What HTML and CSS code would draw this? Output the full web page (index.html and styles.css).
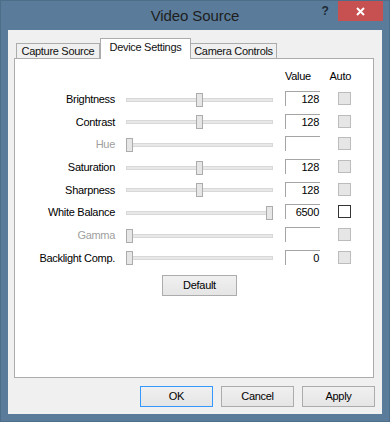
FILE: index.html
```html
<!DOCTYPE html>
<html>
<head>
<meta charset="utf-8">
<link rel="stylesheet" href="styles.css">
</head>
<body>
<div class="window">
  <div class="titlebar">
    <div></div>
    <div class="title">Video Source</div>
    <div class="controls">
      <div class="help">?</div>
      <div class="close">
        <svg width="9" height="9" viewBox="0 0 9 9"><path d="M1 1L8 8M8 1L1 8" stroke="#fff" stroke-width="2"/></svg>
      </div>
    </div>
  </div>
  <div class="client">
    <div class="tabs">
      <div class="tab t1">Capture Source</div>
      <div class="tab sel">Device Settings</div>
      <div class="tab t3">Camera Controls</div>
    </div>
    <div class="panel">
      <div class="row head">
        <div class="spacer"></div>
        <div class="hval">Value</div>
        <div class="hauto">Auto</div>
      </div>
      <div class="row">
        <div class="label">Brightness</div>
        <div class="slider"><div class="track"></div><div class="thumb" style="left:70px"></div></div>
        <div class="value">128</div>
        <div class="check dis"></div>
      </div>
      <div class="row">
        <div class="label">Contrast</div>
        <div class="slider"><div class="track"></div><div class="thumb" style="left:70px"></div></div>
        <div class="value">128</div>
        <div class="check dis"></div>
      </div>
      <div class="row disabled">
        <div class="label">Hue</div>
        <div class="slider"><div class="track"></div><div class="thumb" style="left:0px"></div></div>
        <div class="value"></div>
        <div class="check dis"></div>
      </div>
      <div class="row">
        <div class="label">Saturation</div>
        <div class="slider"><div class="track"></div><div class="thumb" style="left:70px"></div></div>
        <div class="value">128</div>
        <div class="check dis"></div>
      </div>
      <div class="row">
        <div class="label">Sharpness</div>
        <div class="slider"><div class="track"></div><div class="thumb" style="left:70px"></div></div>
        <div class="value">128</div>
        <div class="check dis"></div>
      </div>
      <div class="row">
        <div class="label">White Balance</div>
        <div class="slider"><div class="track"></div><div class="thumb" style="left:140px"></div></div>
        <div class="value">6500</div>
        <div class="check"></div>
      </div>
      <div class="row disabled">
        <div class="label">Gamma</div>
        <div class="slider"><div class="track"></div><div class="thumb" style="left:0px"></div></div>
        <div class="value"></div>
        <div class="check dis"></div>
      </div>
      <div class="row">
        <div class="label">Backlight Comp.</div>
        <div class="slider"><div class="track"></div><div class="thumb" style="left:0px"></div></div>
        <div class="value">0</div>
        <div class="check dis"></div>
      </div>
      <div class="defrow">
        <div class="btn def">Default</div>
      </div>
    </div>
    <div class="buttons">
      <div class="btn ok">OK</div>
      <div class="btn">Cancel</div>
      <div class="btn">Apply</div>
    </div>
  </div>
</div>
</body>
</html>
```

FILE: styles.css
```css
html, body {
  margin: 0;
  padding: 0;
}
body {
  width: 390px;
  height: 422px;
  background: #5a7c9a;
  font-family: "Liberation Sans", Arial, sans-serif;
  font-size: 11px;
  letter-spacing: -0.3px;
  color: #000;
  overflow: hidden;
}
.window {
  box-sizing: border-box;
  width: 390px;
  height: 422px;
  border: 1px solid #4e6d88;
  padding: 0 7px 7px 7px;
  display: flex;
  flex-direction: column;
}
.titlebar {
  height: 29px;
  flex: none;
  display: grid;
  grid-template-columns: 1fr auto 1fr;
  align-items: center;
}
.title {
  font-size: 15px;
  letter-spacing: -0.1px;
  color: #1e1e1e;
}
.controls {
  justify-self: end;
  align-self: start;
  display: flex;
  margin-right: -1px;
}
.help {
  width: 26px;
  height: 20px;
  line-height: 20px;
  text-align: center;
  font-weight: bold;
  font-size: 12px;
  color: #1e2a36;
}
.close {
  width: 45px;
  height: 20px;
  background: #c75050;
  display: flex;
  align-items: center;
  justify-content: center;
}
.close svg { display: block; }
.client {
  flex: 1;
  background: #f0f0f0;
  padding: 8px 8px 7px 6px;
  display: flex;
  flex-direction: column;
}
.tabs {
  height: 21px;
  flex: none;
  display: flex;
  align-items: flex-end;
  padding-left: 2px;
  margin-bottom: -1px;
  position: relative;
  z-index: 1;
}
.tab {
  box-sizing: border-box;
  height: 16px;
  border: 1px solid #acacac;
  background: #f0f0f0;
  text-align: center;
  line-height: 14px;
  white-space: nowrap;
  color: #111;
}
.t1 { width: 84px; }
.sel {
  width: 91px;
  height: 21px;
  background: #fff;
  border-bottom: none;
  line-height: 17px;
}
.t3 { width: 87px; margin-left: -1px; }
.panel {
  flex: 1;
  background: #fff;
  border: 1px solid #acacac;
  padding-top: 6px;
}
.row {
  height: 22.7px;
  display: flex;
  align-items: center;
}
.spacer { width: 270px; }
.hval { width: 35px; }
.hauto { width: 31px; text-align: right; }
.label {
  width: 100px;
  text-align: right;
  white-space: nowrap;
}
.disabled .label { color: #a0a0a0; }
.slider {
  position: relative;
  width: 147px;
  height: 14px;
  margin-left: 11px;
  margin-top: 1px;
}
.track {
  box-sizing: border-box;
  margin-top: 5px;
  height: 4px;
  border: 1px solid #d8d8d8;
  background: #e8e8e8;
}
.thumb {
  position: absolute;
  top: 0;
  box-sizing: border-box;
  width: 7px;
  height: 14px;
  background: #e6e6e6;
  border: 1px solid #acacac;
}
.value {
  box-sizing: border-box;
  width: 35px;
  height: 15px;
  margin-left: 12px;
  margin-top: -1px;
  border-top: 1px solid #a5a5a5;
  border-left: 1px solid #a5a5a5;
  text-align: right;
  padding-right: 1px;
  line-height: 15px;
}
.check {
  box-sizing: border-box;
  width: 13px;
  height: 13px;
  margin-left: 18px;
  margin-top: -1px;
  border: 1px solid #333;
  background: #fff;
}
.check.dis {
  border-color: #bcbcbc;
  background: #e6e6e6;
}
.defrow {
  margin-top: 6px;
  margin-left: 111px;
  width: 147px;
  display: flex;
  justify-content: center;
}
.btn {
  box-sizing: border-box;
  width: 73px;
  height: 21px;
  border: 1px solid #acacac;
  background: linear-gradient(#f0f0f0, #e5e5e5);
  text-align: center;
  line-height: 19px;
}
.def { width: 75px; }
.buttons {
  flex: none;
  display: flex;
  justify-content: flex-end;
  gap: 8px;
  padding-top: 8px;
  margin-right: -1px;
}
.ok {
  border-color: #3399ff;
}
```
